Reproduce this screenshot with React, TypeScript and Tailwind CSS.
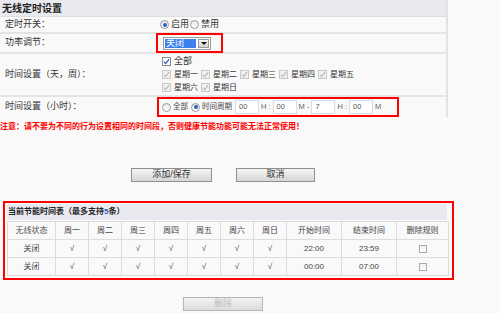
import * as React from "react"

const days = ["星期一", "星期二", "星期三", "星期四", "星期五"]
const days2 = ["星期六", "星期日"]
const cols = ["周一", "周二", "周三", "周四", "周五", "周六", "周日"]
const rules = [
    { state: "关闭", start: "22:00", end: "23:59" },
    { state: "关闭", start: "00:00", end: "07:00" },
]

function Radio({ on }: { on?: boolean }) {
    return (
        <span className="inline-flex shrink-0 w-[9px] h-[9px] rounded-full border border-[#9a9a9a] bg-gradient-to-b from-[#e6e6e6] to-white items-center justify-center mr-[2px]">
            {on && <span className="w-[4px] h-[4px] rounded-full bg-[#2b63c4]" />}
        </span>
    )
}

function Check({ on, disabled }: { on?: boolean; disabled?: boolean }) {
    return (
        <span className={"inline-flex shrink-0 w-[9px] h-[9px] border items-center justify-center mr-[3px] " + (disabled ? "border-[#c8c8c8] bg-[#f1f1f1]" : "border-[#8a8a8a] bg-white")}>
            {on && (
                <svg width="7" height="7" viewBox="0 0 8 8">
                    <path d="M1 4.2 L3.1 6.4 L7 1.2" fill="none" stroke={disabled ? "#b9b9b9" : "#2352b8"} strokeWidth="1.3" />
                </svg>
            )}
        </span>
    )
}

function TimeInput({ value }: { value: string }) {
    return (
        <span className="inline-flex shrink-0 items-center w-[24px] h-[14px] bg-white border border-[#dcdcdc] px-[3px] text-[#555]">{value}</span>
    )
}

export default function App() {
    return (
        <div className="w-[500px] h-[313px] bg-[#f9f9f9] text-[#333] overflow-hidden" style={{ fontFamily: '"Liberation Sans", "Noto Sans CJK SC", sans-serif' }}>
            {/* settings panel */}
            <div className="w-[448px] border-r-2 border-[#e2e2e2]">
                <div className="h-[17px] bg-[#e9eaef] border-b border-[#dedede] pl-[2px] flex items-center text-[10px] font-bold text-[#222]">无线定时设置</div>

                <div className="h-[17px] flex items-center border-b-2 border-[#e4e4e4] text-[9px]">
                    <div className="w-[160px] pl-[5px]">定时开关：</div>
                    <div className="flex items-center">
                        <Radio on />
                        <span className="mr-[1px]">启用</span>
                        <Radio />
                        <span>禁用</span>
                    </div>
                </div>

                <div className="h-[20px] flex items-center border-b-2 border-[#e4e4e4] text-[9px]">
                    <div className="w-[156px] pl-[5px]">功率调节：</div>
                    <div className="w-[67px] h-[20px] border-2 border-[#f00] flex items-center pl-[5px]">
                        <div className="w-[48px] h-[13px] border border-[#9c9c9c] bg-white flex items-stretch p-[1px]">
                            <div className="flex-1 bg-[#3b82f0] text-white text-[9px] leading-[9px] flex items-center pl-[1px]">关闭</div>
                            <div className="w-[11px] ml-[2px] border border-[#9c9c9c] bg-gradient-to-b from-[#f4f4f4] to-[#d4d4d4] flex items-center justify-center">
                                <span className="w-0 h-0 border-l-[3px] border-r-[3px] border-t-[3px] border-l-transparent border-r-transparent border-t-[#111]" />
                            </div>
                        </div>
                    </div>
                </div>

                <div className="h-[43px] flex border-b-2 border-[#e4e4e4] text-[9px]">
                    <div className="w-[160px] pl-[5px] flex items-center">时间设置（天，周）：</div>
                    <div className="flex flex-col justify-center gap-[1px] text-[8px] pl-[2px]">
                        <div className="flex items-center h-[12px] text-[9px]"><Check on /><span>全部</span></div>
                        <div className="flex items-center h-[12px]">
                            {days.map(d => (
                                <span key={d} className="flex items-center w-[39px]"><Check on disabled /><span>{d}</span></span>
                            ))}
                        </div>
                        <div className="flex items-center h-[12px]">
                            {days2.map(d => (
                                <span key={d} className="flex items-center w-[39px]"><Check on disabled /><span>{d}</span></span>
                            ))}
                        </div>
                    </div>
                </div>

                <div className="h-[20px] flex items-center text-[9px]">
                    <div className="w-[157px] pl-[5px]">时间设置（小时）：</div>
                    <div className="w-[242px] h-[20px] border-2 border-[#f00] flex items-center pl-[3px] text-[7.5px] text-[#444] whitespace-nowrap">
                        <Radio />
                        <span className="mr-[3px]">全部</span>
                        <Radio on />
                        <span className="mr-[3px]">时间周期</span>
                        <TimeInput value="00" />
                        <span className="mx-[2px] text-[#666]">H :</span>
                        <TimeInput value="00" />
                        <span className="mx-[2px] text-[#666]">M -</span>
                        <TimeInput value="7" />
                        <span className="mx-[2px] text-[#666]">H :</span>
                        <TimeInput value="00" />
                        <span className="ml-[2px] text-[#666]">M</span>
                    </div>
                </div>
            </div>

            <div className="mt-[4px] h-[14px] text-[8px] font-bold text-[#f00] whitespace-nowrap">注意：请不要为不同的行为设置相同的时间段，否则健康节能功能可能无法正常使用！</div>

            <div className="mt-[33px] flex text-[9px]">
                <button className="ml-[131px] w-[81px] h-[14px] border border-[#8f8f8f] bg-gradient-to-b from-[#f5f5f5] to-[#d6d6d6] text-[#333] flex items-center justify-center">添加/保存</button>
                <button className="ml-[24px] w-[79px] h-[14px] border border-[#8f8f8f] bg-gradient-to-b from-[#f5f5f5] to-[#d6d6d6] text-[#333] flex items-center justify-center">取消</button>
            </div>

            {/* schedule table */}
            <div className="mt-[19px] ml-[3px] w-[451px] border-2 border-[#f00] pl-[2px] pr-[5px] pt-[1px] pb-[2px]">
                <div className="h-[16px] bg-[#e9eaef] flex items-center pl-[1px] text-[8px] font-bold text-[#222]">当前节能时间表（最多支持<span className="text-[#2b63c4]">5</span>条）</div>
                <table className="w-[442px] border-collapse text-[8px] text-[#444] mt-[1px]">
                    <thead>
                        <tr className="h-[18px]">
                            <td className="w-[48px] border border-[#dcdcdc] text-center text-[#555]">无线状态</td>
                            {cols.map(c => (
                                <td key={c} className="w-[33px] border border-[#dcdcdc] text-center">{c}</td>
                            ))}
                            <td className="w-[55px] border border-[#dcdcdc] text-center">开始时间</td>
                            <td className="w-[55px] border border-[#dcdcdc] text-center">结束时间</td>
                            <td className="border border-[#dcdcdc] text-center">删除规则</td>
                        </tr>
                    </thead>
                    <tbody>
                        {rules.map((r, i) => (
                            <tr key={i} className="h-[18px]">
                                <td className="border border-[#dcdcdc] text-center">{r.state}</td>
                                {cols.map(c => (
                                    <td key={c} className="border border-[#dcdcdc] text-center">√</td>
                                ))}
                                <td className="border border-[#dcdcdc] text-center">{r.start}</td>
                                <td className="border border-[#dcdcdc] text-center">{r.end}</td>
                                <td className="border border-[#dcdcdc]">
                                    <div className="flex justify-center"><span className="w-[8px] h-[8px] border border-[#aaa] bg-gradient-to-b from-[#eee] to-white" /></div>
                                </td>
                            </tr>
                        ))}
                    </tbody>
                </table>
            </div>

            <div className="mt-[17px] flex">
                <button className="ml-[183px] w-[80px] h-[14px] border border-[#b5b5b5] bg-gradient-to-b from-[#f3f3f3] to-[#dcdcdc] text-[#bdbdbd] text-[9px] flex items-center justify-center">删除</button>
            </div>
        </div>
    )
}
